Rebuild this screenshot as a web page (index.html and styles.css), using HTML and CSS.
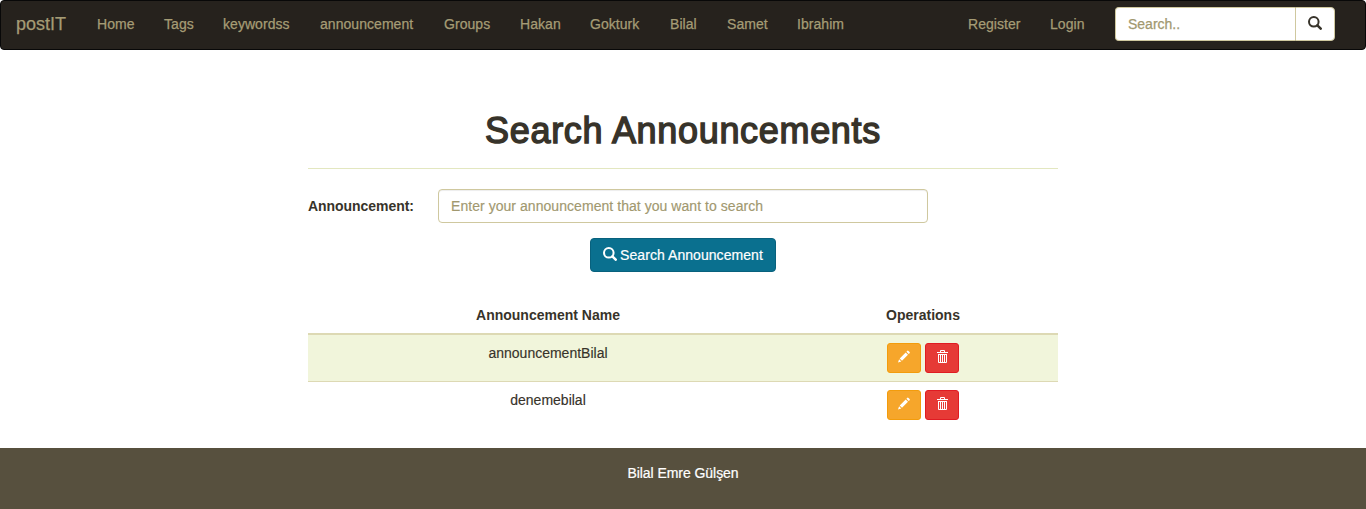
FILE: index.html
```html
<!DOCTYPE html>
<html lang="en">
<head>
<meta charset="utf-8">
<title>Search Announcements</title>
<link rel="stylesheet" href="styles.css">
</head>
<body>
<svg class="sprite" aria-hidden="true">
  <symbol id="search" viewBox="0 0 14 14"><circle cx="5.8" cy="5.8" r="4.8" fill="none" stroke="currentColor" stroke-width="2"/><path d="M9.4 9.4L12.7 12.7" stroke="currentColor" stroke-width="2.5" stroke-linecap="round"/></symbol>
  <symbol id="pencil" viewBox="0 0 12 12"><path fill="currentColor" d="M0 12L1.1 8.7L3.3 10.9ZM1.7 8L7.7 2L10 4.3L4 10.3ZM8.4 1.3L9.4.3Q9.9-.1 10.5.4L11.6 1.5Q12.1 2.1 11.6 2.7L10.7 3.6Z"/></symbol>
  <symbol id="trash" viewBox="0 0 12 13"><path fill="none" stroke="currentColor" d="M1 2.5H12M4.5 2V.5H8.5V2M2.5 4V12.5H10.5V4M2 4.5H11M4.5 5V12M6.5 5V12M8.5 5V12"/></symbol>
</svg>
<nav class="navbar">
  <a class="brand">postIT</a>
  <ul class="nav nav-main">
    <li>Home</li><li>Tags</li><li>keywordss</li><li>announcement</li><li>Groups</li><li>Hakan</li><li>Gokturk</li><li>Bilal</li><li>Samet</li><li>Ibrahim</li>
  </ul>
  <ul class="nav nav-user"><li>Register</li><li>Login</li></ul>
  <form class="nav-search">
    <input type="text" placeholder="Search..">
    <button type="button" aria-label="Search"><svg class="icon"><use href="#search"/></svg></button>
  </form>
</nav>
<main class="container">
  <h1>Search Announcements</h1>
  <form class="search-form">
    <div class="form-row">
      <label for="q">Announcement:</label>
      <input id="q" class="field" type="text" placeholder="Enter your announcement that you want to search">
    </div>
    <button type="button" class="btn-primary"><svg class="icon"><use href="#search"/></svg><span>Search Announcement</span></button>
  </form>
  <table class="results">
    <thead><tr><th class="name">Announcement Name</th><th class="ops">Operations</th></tr></thead>
    <tbody>
      <tr><td>announcementBilal</td><td><div class="actions"><button class="btn edit" aria-label="Edit"><svg><use href="#pencil"/></svg></button><button class="btn delete" aria-label="Delete"><svg><use href="#trash"/></svg></button></div></td></tr>
      <tr><td>denemebilal</td><td><div class="actions"><button class="btn edit" aria-label="Edit"><svg><use href="#pencil"/></svg></button><button class="btn delete" aria-label="Delete"><svg><use href="#trash"/></svg></button></div></td></tr>
    </tbody>
  </table>
</main>
<footer class="footer">Bilal Emre Gülşen</footer>
</body>
</html>
```
FILE: styles.css
```css
* { box-sizing: border-box; }
body {
  margin: 0;
  min-height: 509px;
  display: flex;
  flex-direction: column;
  background: #fff;
  color: #37332a;
  font: 14px/20px "Liberation Sans", Arial, sans-serif;
}
input, button { font: inherit; letter-spacing: inherit; }
.sprite { display: none; }

.navbar {
  display: flex;
  align-items: center;
  height: 50px;
  padding: 0 30px 2px 15px;
  border: 1px solid #080808;
  border-radius: 4px;
  background: #26221d;
  color: #a59c75;
  -webkit-text-stroke: .25px currentColor;
}
.brand { width: 66px; font-size: 18px; }
.nav { display: flex; margin: 0; padding: 0; list-style: none; white-space: nowrap; }
.nav li { padding-left: 15px; letter-spacing: .05px; }
.nav-main li:nth-child(1) { width: 67px; }
.nav-main li:nth-child(2) { width: 59px; }
.nav-main li:nth-child(3) { width: 97px; }
.nav-main li:nth-child(4) { width: 124px; }
.nav-main li:nth-child(5) { width: 76px; }
.nav-main li:nth-child(6) { width: 70px; }
.nav-main li:nth-child(7) { width: 80px; }
.nav-main li:nth-child(8) { width: 57px; }
.nav-main li:nth-child(9) { width: 70px; }
.nav-user { margin-left: auto; }
.nav-user li:nth-child(1) { width: 82px; }
.nav-user li:nth-child(2) { width: 80px; }
.nav-search { display: flex; width: 220px; height: 34px; }
.nav-search input {
  flex: 1;
  min-width: 0;
  padding: 6px 12px;
  border: 1px solid #cfc89f;
  border-right: 0;
  border-radius: 4px 0 0 4px;
  background: #fff;
}
.nav-search button {
  width: 40px;
  padding: 0 0 2px 12px;
  border: 1px solid #cfc89f;
  border-radius: 0 4px 4px 0;
  background: #fff;
  color: #37332a;
  display: flex;
  align-items: center;
}
.icon { width: 14px; height: 14px; flex: none; }
input::placeholder { color: #a1986f; opacity: 1; }

.container { width: 750px; height: 398px; margin: 0 auto; }
h1 {
  margin: 61px 0 20px;
  padding-bottom: 17px;
  border-bottom: 1px solid #e3e7c0;
  text-align: center;
  font-size: 36px;
  line-height: 40px;
  font-weight: 400;
  letter-spacing: .68px;
  -webkit-text-stroke: 1.4px #37332a;
}
.search-form { display: flex; flex-direction: column; align-items: center; }
.form-row { display: flex; align-items: center; width: 100%; margin-bottom: 15px; }
.form-row label { width: 130px; font-weight: 700; letter-spacing: -.05px; }
.field {
  width: 490px;
  height: 34px;
  padding: 6px 12px;
  border: 1px solid #cfc89f;
  border-radius: 4px;
  box-shadow: inset 0 1px 1px rgba(0, 0, 0, .075);
  letter-spacing: .05px;
  -webkit-text-stroke: .15px currentColor;
}
.btn-primary {
  display: flex;
  align-items: center;
  justify-content: center;
  gap: 3px;
  width: 186px;
  height: 34px;
  padding: 0;
  border: 1px solid #08617d;
  border-radius: 4px;
  background: #0a708f;
  color: #fff;
  white-space: nowrap;
  letter-spacing: .06px;
  -webkit-text-stroke: .2px currentColor;
}
.btn-primary .icon { margin-bottom: 2px; }
.results { width: 100%; margin-top: 25px; border-collapse: separate; border-spacing: 0; table-layout: fixed; }
.results th, .results td { padding: 8px; text-align: center; vertical-align: top; }
.results th { height: 38px; border-bottom: 2px solid #ddd9b4; }
.name { width: 480px; }
.results td { height: 46px; -webkit-text-stroke: .15px currentColor; }
.results tbody tr:first-child td { background: #f1f5db; }
.results tbody tr + tr td { height: 47px; border-top: 1px solid #ddd9b4; }
.actions { display: flex; justify-content: center; gap: 4px; }
.btn { display: flex; width: 34px; height: 30px; padding: 6px 10px; border: 1px solid; border-radius: 3px; color: #fff; }
.btn svg { width: 12px; height: 13px; }
.edit { background: #f6a62b; border-color: #f39c0c; }
.delete { background: #e63a36; border-color: #e01b22; }

.footer { flex: 1; padding-top: 15px; background: #57503e; color: #fff; text-align: center; letter-spacing: -.05px; -webkit-text-stroke: .2px currentColor; }
```
